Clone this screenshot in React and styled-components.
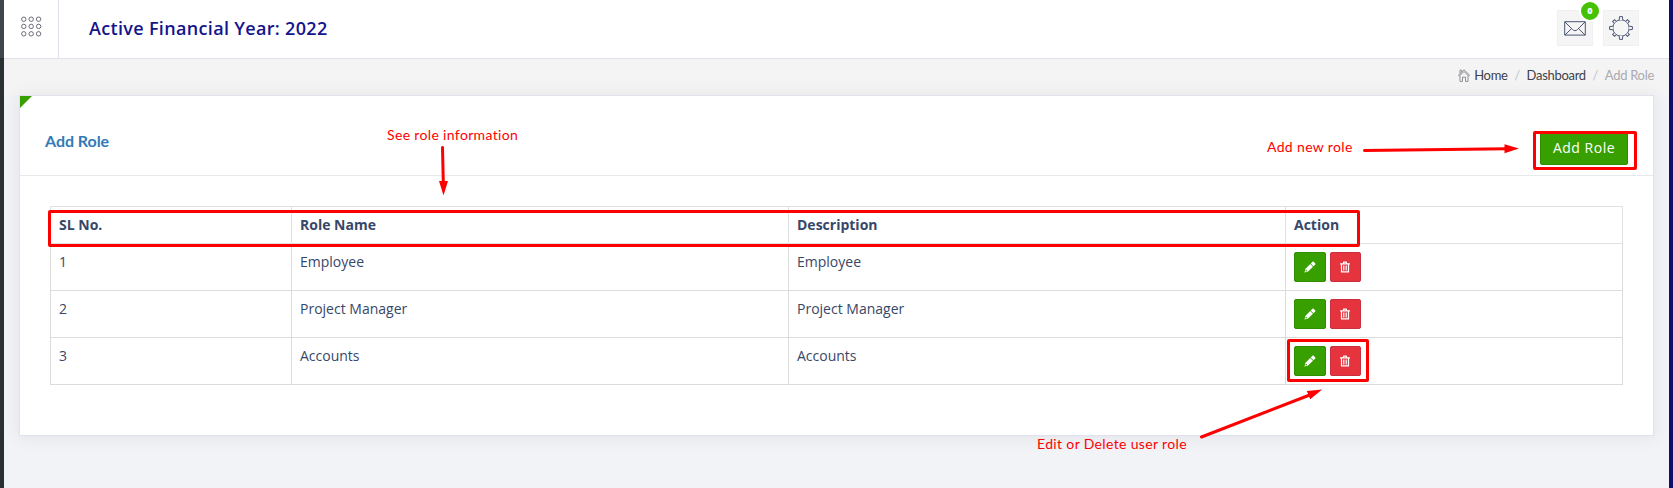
import React from "react";
import styled, { createGlobalStyle } from "styled-components";

const GlobalStyle = createGlobalStyle`
  * { box-sizing: border-box; }
  body {
    margin: 0;
    background: #f1f3f6;
    color: #374767;
    font-family: "Open Sans", sans-serif;
    font-size: 14px;
    line-height: 20px;
    overflow: hidden;
  }
`;

const Page = styled.div`
  position: relative;
  display: flex;
  width: 1673px;
  height: 488px;
`;

const SideEdge = styled.div`
  flex: 0 0 4px;
  background: linear-gradient(#40474b 58px, #2b3032 58px);
`;

const RightEdge = styled.div`
  flex: 0 0 4px;
  background: #10106c;
`;

const Main = styled.main`
  flex: 1;
  display: flex;
  flex-direction: column;
  min-width: 0;
`;

const Topbar = styled.header`
  display: flex;
  align-items: stretch;
  height: 59px;
  background: #fff;
  border-bottom: 1px solid #e1e1ee;
`;

const MenuToggle = styled.div`
  width: 55px;
  padding: 16px 0 0 17px;
  border-right: 1px solid #e1e1ee;
`;

const YearTitle = styled.h1`
  flex: 1;
  margin: 0;
  padding: 16px 0 0 30px;
  color: #14148c;
  font-size: 18px;
  font-weight: 600;
  line-height: 25px;
  letter-spacing: 0.33px;
`;

const Tools = styled.div`
  display: flex;
  gap: 10px;
  padding: 10px 30px 0 0;
`;

const ToolButton = styled.div`
  position: relative;
  display: flex;
  align-items: center;
  justify-content: center;
  width: 36px;
  height: 36px;
  background: #f5f5f5;
  border: 1px solid #f0f0f1;
`;

const Badge = styled.span`
  position: absolute;
  top: -11px;
  right: -9px;
  width: 22px;
  height: 22px;
  border: 2px solid #fff;
  border-radius: 50%;
  background: #45c203;
  color: #fff;
  font: 800 9px/18px "Open Sans", sans-serif;
  text-align: center;
`;

const Crumbs = styled.nav`
  display: flex;
  justify-content: flex-end;
  align-items: center;
  height: 36px;
  padding: 0 15px 4px 0;
  background: #f4f4f4;
  font-family: Lato, sans-serif;
  font-size: 13px;
  letter-spacing: -0.3px;
`;

const Crumb = styled.span`
  display: flex;
  align-items: center;
  gap: 4px;
  color: ${(p) => (p.$muted ? "#aaaaae" : "#414248")};
`;

const Slash = styled.span`
  width: 19px;
  text-align: center;
  color: #c3c3c6;
`;

const Card = styled.section`
  position: relative;
  width: 1635px;
  height: 341px;
  margin-left: 15px;
  background: #fff;
  border: 1px solid #e1e2ed;
  box-shadow: 0 1px 15px 1px rgba(69, 65, 98, 0.08);
`;

const Corner = styled.i`
  position: absolute;
  top: 0;
  left: 0;
  border-top: 12px solid #37a000;
  border-right: 12px solid transparent;
`;

const CardHead = styled.div`
  display: flex;
  justify-content: space-between;
  align-items: flex-start;
  height: 80px;
  padding: 35px 25px 0 25px;
  border-bottom: 1px solid #e8e9ec;
`;

const CardTitle = styled.h2`
  margin: -1px 0 0;
  color: #337ab7;
  font: 700 16px/22px Lato, sans-serif;
  letter-spacing: -0.05px;
`;

const AddButton = styled.button`
  width: 88px;
  height: 34px;
  padding: 0;
  border: 1px solid #318d01;
  border-radius: 2px;
  background: #37a000;
  color: #fff;
  font: 400 14px/30px "Open Sans", sans-serif;
  letter-spacing: 0.5px;
`;

const CardBody = styled.div`
  padding: 30px;
`;

const Table = styled.table`
  width: 1573px;
  border-collapse: collapse;
  table-layout: fixed;
`;

const HeadCell = styled.th`
  width: ${(p) => p.$w}px;
  height: 37px;
  padding: 8px;
  border: 1px solid #e0e1e5;
  text-align: left;
  vertical-align: top;
  font-weight: 700;
`;

const Cell = styled.td`
  height: 47px;
  padding: 8px;
  border: 1px solid #dcdcdd;
  vertical-align: top;
`;

const Actions = styled.div`
  display: flex;
  gap: 4px;
`;

const IconButton = styled.button`
  display: flex;
  align-items: center;
  justify-content: center;
  width: ${(p) => (p.$danger ? 31 : 32)}px;
  height: 30px;
  padding: 0 1px 0 0;
  border: 1px solid ${(p) => (p.$danger ? "#c9303b" : "#318d01")};
  border-radius: 2px;
  background: ${(p) => (p.$danger ? "#e5343d" : "#37a000")};
`;

const Frame = styled.div`
  position: absolute;
  left: ${(p) => p.$x}px;
  top: ${(p) => p.$y}px;
  width: ${(p) => p.$w}px;
  height: ${(p) => p.$h}px;
  border: 3px solid #f00;
  border-radius: 2px;
`;

const Note = styled.span`
  position: absolute;
  left: ${(p) => p.$x}px;
  top: ${(p) => p.$y}px;
  color: #f00;
  font: 400 14px/18px Lato, sans-serif;
  letter-spacing: 0.35px;
  white-space: nowrap;
`;

const Arrows = styled.svg`
  position: absolute;
  inset: 0;
  pointer-events: none;
`;

const GridIcon = () => (
  <svg width="21" height="21" viewBox="0 0 21 21" fill="none" stroke="#5b5d6b" strokeWidth="0.9">
    {[3.2, 10.4, 17.8].map((y) =>
      [2.8, 10.2, 17.6].map((x) => <circle key={`${x}-${y}`} cx={x} cy={y} r="2.2" />)
    )}
  </svg>
);

const MailIcon = () => (
  <svg width="22" height="15" viewBox="0 0 22 15" fill="none" stroke="#4c5572" strokeWidth="1">
    <path d="M.7.7h20.6v13.4H.7zM1 1l7.4 7.4c1.8 1.7 3.4 1.7 5.2 0L21 1M1 14l6.5-6.4M21 14l-6.5-6.4" />
  </svg>
);

const GearIcon = () => (
  <svg width="24" height="24" viewBox="0 0 24 24" fill="none" stroke="#4c5572" strokeWidth="1">
    <circle cx="12" cy="12" r="8.2" />
    {[0, 45, 90, 135, 180, 225, 270, 315].map((a) => (
      <path
        key={a}
        transform={`rotate(${a} 12 12)`}
        fill="#f5f5f5"
        d={a % 90 ? "M10.6 3.9V1.5h2.8v2.4" : "M10.2 3.9L10.6.6h2.8l.4 3.3"}
      />
    ))}
  </svg>
);

const HomeIcon = () => (
  <svg width="12" height="13" viewBox="0 0 12 13" fill="none" stroke="#85868b" strokeWidth="0.9">
    <path d="M.4 6.2L6 .8l5.6 5.4-.9.8L6 2.6 1.3 7zM2 6.7v5.7h2.5V8.2h3v4.2H10V6.7M2 4.4V1.2h1.6v1.6" />
  </svg>
);

const PencilIcon = () => (
  <svg width="12" height="12" viewBox="0 0 12 12" fill="#fff">
    <path d="M.5 11.4l.8-3.5L6.2 3l2.8 2.8-4.9 4.8zM6.7 2.5L8.3.9c.5-.5 1-.5 1.5 0l1.3 1.3c.5.5.5 1 0 1.5L9.5 5.3z" />
    <path d="M1.9 8.6l1.4 1.4-1.5.4-.4-.4z" fill="#37a000" />
  </svg>
);

const TrashIcon = () => (
  <svg width="10" height="12" viewBox="0 0 10 12" fill="none" stroke="#fff">
    <path d="M0 2.8h10M3.2 2.6l.5-1.5h2.6l.5 1.5M1.5 3v7.8h7V3" strokeWidth="1.2" />
    <path d="M3.5 4.5v5M5 4.5v5M6.5 4.5v5" strokeWidth="0.8" />
  </svg>
);

const columns = [
  { label: "SL No.", width: 241 },
  { label: "Role Name", width: 497 },
  { label: "Description", width: 497 },
  { label: "Action", width: 337 },
];

const roles = ["Employee", "Project Manager", "Accounts"];

export default function App() {
  return (
    <Page>
      <GlobalStyle />
      <SideEdge />
      <Main>
        <Topbar>
          <MenuToggle><GridIcon /></MenuToggle>
          <YearTitle>Active Financial Year: 2022</YearTitle>
          <Tools>
            <ToolButton><MailIcon /><Badge>0</Badge></ToolButton>
            <ToolButton><GearIcon /></ToolButton>
          </Tools>
        </Topbar>
        <Crumbs>
          <Crumb><HomeIcon />Home</Crumb>
          <Slash>/</Slash>
          <Crumb>Dashboard</Crumb>
          <Slash>/</Slash>
          <Crumb $muted>Add Role</Crumb>
        </Crumbs>
        <Card>
          <Corner />
          <CardHead>
            <CardTitle>Add Role</CardTitle>
            <AddButton>Add Role</AddButton>
          </CardHead>
          <CardBody>
            <Table>
              <thead>
                <tr>
                  {columns.map((c) => <HeadCell key={c.label} $w={c.width}>{c.label}</HeadCell>)}
                </tr>
              </thead>
              <tbody>
                {roles.map((role, i) => (
                  <tr key={role}>
                    <Cell>{i + 1}</Cell>
                    <Cell>{role}</Cell>
                    <Cell>{role}</Cell>
                    <Cell>
                      <Actions>
                        <IconButton aria-label="Edit"><PencilIcon /></IconButton>
                        <IconButton $danger aria-label="Delete"><TrashIcon /></IconButton>
                      </Actions>
                    </Cell>
                  </tr>
                ))}
              </tbody>
            </Table>
          </CardBody>
        </Card>
      </Main>
      <RightEdge />

      <Frame $x={48} $y={210} $w={1312} $h={37} />
      <Frame $x={1533} $y={131} $w={104} $h={39} />
      <Frame $x={1287} $y={339} $w={82} $h={43} />
      <Note $x={387} $y={126}>See role information</Note>
      <Note $x={1267} $y={138}>Add new role</Note>
      <Note $x={1037} $y={435}>Edit or Delete user role</Note>
      <Arrows width="1673" height="488" stroke="#f00" strokeWidth="3" strokeLinecap="round" fill="#f00">
        <path d="M442.5 147.5L443.3 183M1364.5 150.5L1507 148.7M1201.5 437L1311 394.5" />
        <path stroke="none" d="M439 181h9l-4.5 14.5zM1504.5 144.3v9l14.5-4.7zM1306.8 391l3.4 8.2 12-9.8z" />
      </Arrows>
    </Page>
  );
}
